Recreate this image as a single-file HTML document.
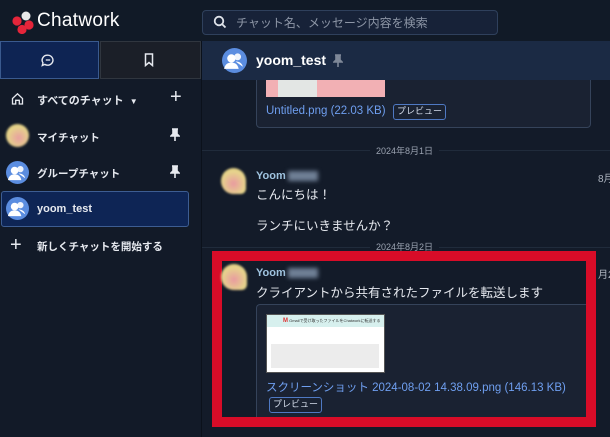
<!DOCTYPE html>
<html><head><meta charset="utf-8"><style>
*{margin:0;padding:0;box-sizing:border-box}
body{width:610px;height:437px;overflow:hidden;background:#131b29;font-family:"Liberation Sans","Noto Sans CJK JP",sans-serif;color:#e6e9ef;position:relative}
.a{position:absolute}
.t{white-space:nowrap}
</style></head><body>
<!-- first card (under header) -->
<div class="a" style="left:256px;top:70px;width:335px;height:58px;background:#1a2232;border:1px solid #35435a;border-radius:4px"></div>
<div class="a" style="left:266px;top:80px;width:119px;height:17px;background:#e3e6e4;border-left:12px solid #f2b0b4;border-right:68px solid #f2b0b4"></div>
<div class="a t" style="left:266px;top:105px;font-size:11.5px;color:#6f9ff0">Untitled.png (22.03 KB)</div>
<div class="a t" style="left:393px;top:104px;width:53px;height:16px;border:1.5px solid #4f79c3;border-radius:3px;font-size:9px;text-align:center;line-height:13px;color:#d6deec">プレビュー</div>

<!-- top bar -->
<div class="a" style="left:0;top:0;width:610px;height:41px;background:#111a27"></div>
<svg class="a" style="left:10px;top:10px" width="26" height="24" viewBox="0 0 26 24">
<circle cx="16" cy="6" r="4.5" fill="#e8e8e8"/><circle cx="7" cy="11" r="4.6" fill="#e5253a"/><circle cx="19" cy="15" r="4.6" fill="#e5253a"/><circle cx="12" cy="19.5" r="4.6" fill="#e5253a"/></svg>
<div class="a t" style="left:37px;top:10px;font-size:19px;color:#fff;font-weight:500;letter-spacing:0.3px">Chatwork</div>
<div class="a" style="left:202px;top:10px;width:296px;height:25px;background:#172238;border:1px solid #2f405c;border-radius:4px"></div>
<svg class="a" style="left:213px;top:15px" width="14" height="14" viewBox="0 0 14 14"><circle cx="6" cy="6" r="4.3" stroke="#dfe3ea" stroke-width="1.8" fill="none"/><path d="M9.2 9.2L12.5 12.5" stroke="#dfe3ea" stroke-width="1.8"/></svg>
<div class="a t" style="left:236px;top:14px;font-size:12px;color:#8d96a6">チャット名、メッセージ内容を検索</div>

<!-- tabs -->
<div class="a" style="left:0;top:41px;width:99px;height:38px;background:#0e2453;border:1px solid #3a5a8e"></div>
<div class="a" style="left:100px;top:41px;width:101px;height:38px;background:#1b1f28;border:1px solid #30363f"></div>
<svg class="a" style="left:41px;top:54px" width="14" height="13" viewBox="0 0 14 13"><path d="M7 1.2a5.3 5 0 1 1-3.2 9.2L1.3 11.5l.7-2.6A5.3 5 0 0 1 7 1.2z" stroke="#e6e9ef" stroke-width="1.4" fill="none"/><path d="M4.8 6h4.4" stroke="#e6e9ef" stroke-width="1.3"/></svg>
<svg class="a" style="left:144px;top:53px" width="10" height="14" viewBox="0 0 10 14"><path d="M1.5 1h7v11.5L5 9.5 1.5 12.5z" stroke="#e6e9ef" stroke-width="1.5" fill="none"/></svg>

<!-- sidebar -->
<div class="a" style="left:0;top:79px;width:201px;height:358px;background:#121a28"></div>
<div class="a" style="left:201px;top:41px;width:1px;height:396px;background:#0b111b"></div>
<svg class="a" style="left:11px;top:92px" width="13" height="13" viewBox="0 0 13 13"><path d="M1.5 6.5L6.5 1.8l5 4.7V12H8.3V8.3H4.7V12H1.5z" stroke="#e6e9ef" stroke-width="1.3" fill="none"/></svg>
<div class="a t" style="left:37px;top:92px;font-size:11px;font-weight:bold">すべてのチャット <span style="font-size:8px;margin-left:3px">▼</span></div>
<div class="a t" style="left:170px;top:86px;font-size:20px;font-weight:300">+</div>

<div class="a" style="left:6px;top:124px;width:23px;height:23px;border-radius:50%;background:radial-gradient(circle at 55% 60%,#e8a0a0,#e6d48a 60%,#d8c67c);filter:blur(1px)"></div>
<div class="a t" style="left:37px;top:130px;font-size:10.5px;font-weight:bold">マイチャット</div>
<svg class="a" style="left:170px;top:128px" width="10" height="14" viewBox="0 0 10 14"><path d="M2 1h6M3 1v5L1 8h8L7 6V1M5 8v5" stroke="#e6e9ef" stroke-width="1.6" fill="#e6e9ef"/></svg>

<svg class="a" style="left:6px;top:161px" width="23" height="23" viewBox="0 0 24 24"><circle cx="12" cy="12" r="12" fill="#5b8de0"/><circle cx="9" cy="10" r="4" fill="#fff"/><path d="M2 20c1-5 4-6 7-6s6 1 7 6" fill="#fff"/><circle cx="15" cy="8.5" r="3.3" fill="#fff" opacity=".9"/><path d="M13 13c3 0 6 1 7 5" fill="#fff"/></svg>
<div class="a t" style="left:37px;top:166px;font-size:10.5px;font-weight:bold">グループチャット</div>
<svg class="a" style="left:170px;top:165px" width="10" height="14" viewBox="0 0 10 14"><path d="M2 1h6M3 1v5L1 8h8L7 6V1M5 8v5" stroke="#e6e9ef" stroke-width="1.6" fill="#e6e9ef"/></svg>

<div class="a" style="left:1px;top:191px;width:188px;height:36px;background:#0e2555;border:1px solid #3d5d92;border-radius:3px"></div>
<svg class="a" style="left:6px;top:197px" width="23" height="23" viewBox="0 0 24 24"><circle cx="12" cy="12" r="12" fill="#5b8de0"/><circle cx="9" cy="10" r="4" fill="#fff"/><path d="M2 20c1-5 4-6 7-6s6 1 7 6" fill="#fff"/><circle cx="15" cy="8.5" r="3.3" fill="#fff" opacity=".9"/><path d="M13 13c3 0 6 1 7 5" fill="#fff"/></svg>
<div class="a t" style="left:37px;top:203px;font-size:11px;font-weight:bold">yoom_test</div>

<div class="a t" style="left:10px;top:234px;font-size:20px;font-weight:300">+</div>
<div class="a t" style="left:37px;top:239px;font-size:10.5px;font-weight:bold">新しくチャットを開始する</div>

<!-- chat header -->
<div class="a" style="left:202px;top:41px;width:408px;height:39px;background:#1b2a44"></div>
<svg class="a" style="left:222px;top:48px" width="25" height="25" viewBox="0 0 24 24"><circle cx="12" cy="12" r="12" fill="#5b8de0"/><circle cx="9" cy="10" r="4" fill="#fff"/><path d="M2 20c1-5 4-6 7-6s6 1 7 6" fill="#fff"/><circle cx="15" cy="8.5" r="3.3" fill="#fff" opacity=".9"/><path d="M13 13c3 0 6 1 7 5" fill="#fff"/></svg>
<div class="a t" style="left:256px;top:52px;font-size:14px;font-weight:bold;color:#fff">yoom_test</div>
<svg class="a" style="left:333px;top:54px" width="10" height="14" viewBox="0 0 10 14"><path d="M2 1h6M3 1v5L1 8h8L7 6V1M5 8v5" stroke="#7f8898" stroke-width="1.6" fill="#7f8898"/></svg>

<div class="a" style="left:202px;top:150px;width:408px;height:1px;background:#202b3b"></div>
<div class="a t" style="left:370px;top:144px;padding:0 6px;background:#131b29;font-size:9px;color:#9aa2b0">2024年8月1日</div>

<div class="a" style="left:221px;top:168px;width:25px;height:26px;border-radius:50% 50% 20% 50%;background:radial-gradient(circle at 50% 60%,#e89aa0,#e7d48c 60%,#d8c67c);filter:blur(1px)"></div>
<div class="a t" style="left:256px;top:170px;font-size:11px;font-weight:bold;color:#9fc3df">Yoom<span style="display:inline-block;width:30px;height:10px;background:#6f7f95;filter:blur(2px);vertical-align:middle;margin-left:2px"></span></div>
<div class="a t" style="left:598px;top:170px;font-size:10px;color:#aeb5c0">8月</div>
<div class="a t" style="left:256px;top:184px;font-size:12.5px">こんにちは！</div>
<div class="a t" style="left:256px;top:215px;font-size:12.5px">ランチにいきませんか？</div>

<div class="a" style="left:202px;top:247px;width:408px;height:1px;background:#202b3b"></div>
<div class="a t" style="left:370px;top:240px;padding:0 6px;background:#131b29;font-size:9px;color:#9aa2b0">2024年8月2日</div>

<!-- highlighted message -->
<div class="a" style="left:212px;top:251px;width:384px;height:176px;border:10px solid #d80c28"></div>
<div class="a" style="left:221px;top:264px;width:26px;height:26px;border-radius:50% 50% 20% 50%;background:radial-gradient(circle at 50% 60%,#e89aa0,#e7d48c 60%,#d8c67c);filter:blur(1px)"></div>
<div class="a t" style="left:256px;top:267px;font-size:11px;font-weight:bold;color:#9fc3df">Yoom<span style="display:inline-block;width:30px;height:10px;background:#6f7f95;filter:blur(2px);vertical-align:middle;margin-left:2px"></span></div>
<div class="a t" style="left:598px;top:266px;font-size:10px;color:#aeb5c0">月2</div>
<div class="a t" style="left:256px;top:282px;font-size:12.5px">クライアントから共有されたファイルを転送します</div>
<div class="a" style="left:256px;top:304px;width:330px;height:113px;background:#1a2232;border:1px solid #35435a;border-right:none;border-bottom:none;border-radius:4px 0 0 0"></div>
<div class="a" style="left:266px;top:314px;width:119px;height:59px;background:#fff;border:1px solid #555"></div>
<div class="a" style="left:267px;top:315px;width:117px;height:12px;background:#d7f0ee"></div>
<div class="a t" style="left:283px;top:318px;font-size:4px;color:#333"><b style="color:#d33;font-size:6px">M</b> Gmailで受け取ったファイルをChatworkに転送する</div>
<div class="a" style="left:271px;top:344px;width:108px;height:24px;background:#ececec"></div>
<div class="a t" style="left:266px;top:379px;font-size:11.5px;color:#6f9ff0">スクリーンショット 2024-08-02 14.38.09.png (146.13 KB)</div>
<div class="a t" style="left:269px;top:397px;width:53px;height:16px;border:1.5px solid #4f79c3;border-radius:3px;font-size:9px;text-align:center;line-height:13px;color:#d6deec">プレビュー</div>
</body></html>
